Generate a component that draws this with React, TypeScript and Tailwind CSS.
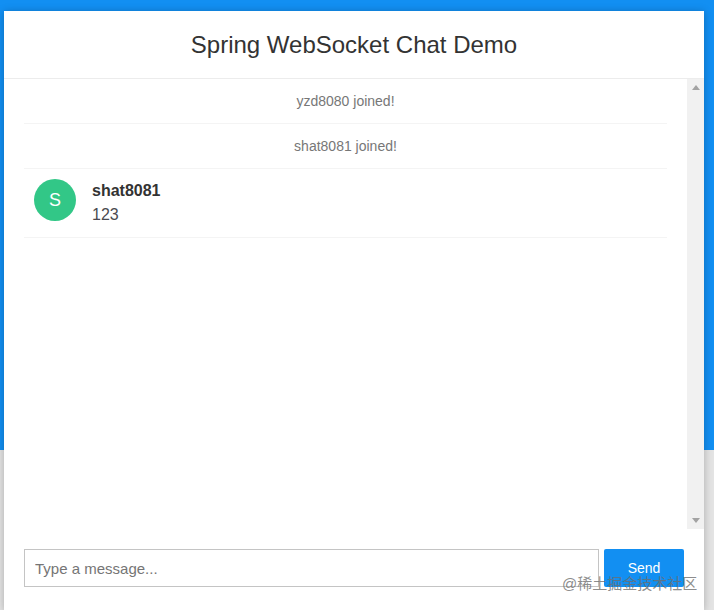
import React from 'react'

const font = { fontFamily: '"Liberation Sans", Arial, sans-serif' }

const EventRow = ({ text }: { text: string }) => (
  <li className="h-[45px] border-b border-[#f4f4f4] flex items-center justify-center text-[14px] text-[#777]">
    {text}
  </li>
)

export default function App() {
  return (
    <div
      className="relative h-[610px] w-[714px] overflow-hidden pl-[4px] pr-[10px] pt-[11px] bg-[linear-gradient(#128ff2_450px,#e4e4e4_450px)] text-[#333]"
      style={font}
    >
      <div className="flex h-[599px] w-[700px] flex-col bg-white shadow-[0_1px_8px_rgba(0,0,0,0.25)]">
        {/* Header */}
        <div className="flex h-[68px] shrink-0 items-center justify-center border-b border-[#ececec]">
          <h2 className="text-[24px] font-normal leading-none">Spring WebSocket Chat Demo</h2>
        </div>

        {/* Messages + scrollbar */}
        <div className="flex h-[450px] shrink-0">
          <ul className="flex-1 px-[20px]">
            <EventRow text="yzd8080 joined!" />
            <EventRow text="shat8081 joined!" />
            <li className="flex h-[69px] items-start gap-[16px] border-b border-[#f4f4f4] pl-[10px] pt-[10px]">
              <div className="flex h-[42px] w-[42px] items-center justify-center rounded-full bg-[#32c787] text-[18px] text-white">
                S
              </div>
              <div className="pt-[1px]">
                <div className="text-[16px] font-bold leading-[22px] text-[#333]">shat8081</div>
                <div className="mt-[1px] text-[16px] leading-[24px] text-[#4a4a50]">123</div>
              </div>
            </li>
          </ul>
          <div className="flex w-[17px] flex-col items-center justify-between bg-[#f1f1f1] py-[6px]">
            <svg width="8" height="5" viewBox="0 0 8 5">
              <path d="M4 0 8 5H0z" fill="#a3a3a3" />
            </svg>
            <svg width="8" height="5" viewBox="0 0 8 5">
              <path d="M0 0h8L4 5z" fill="#a3a3a3" />
            </svg>
          </div>
        </div>

        {/* Composer */}
        <div className="flex gap-[5px] pl-[20px] pt-[20px]">
          <input
            readOnly
            placeholder="Type a message..."
            className="h-[38px] w-[575px] border border-[#c4c4c4] bg-white px-[10px] pt-[1px] text-[15px] outline-none placeholder:text-[#757575]"
          />
          <button className="h-[38px] w-[80px] rounded-[2px] bg-[#128ff2] text-[14px] text-white">Send</button>
        </div>
      </div>

      {/* juejin watermark */}
      <div
        className="absolute left-[562px] top-[574px] whitespace-nowrap text-[15px] leading-[20px] text-[rgba(110,110,110,0.8)]"
        style={{ fontFamily: '"Liberation Sans", "Noto Sans CJK SC", sans-serif' }}
      >
        @稀土掘金技术社区
      </div>
    </div>
  )
}
